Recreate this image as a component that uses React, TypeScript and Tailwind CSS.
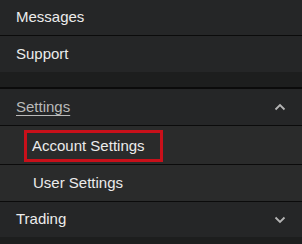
const Chevron = ({ up }: { up?: boolean }) => (
  <svg width="12" height="8" viewBox="0 0 12 8" className="text-[#b5b5b5]">
    <path
      d={up ? "M1.5 6.5 L6 2 L10.5 6.5" : "M1.5 1.5 L6 6 L10.5 1.5"}
      fill="none"
      stroke="currentColor"
      strokeWidth="1.8"
    />
  </svg>
);

export default function App() {
  return (
    <div
      className="w-[302px] h-[244px] overflow-hidden bg-[#252627] text-[15px] text-[#ececec]"
      style={{ fontFamily: '"Liberation Sans", Arial, sans-serif' }}
    >
      <div className="flex h-[36px] items-center border-b border-[#0b0b0b] pl-[16px]">Messages</div>
      <div className="flex h-[36px] items-center pl-[16px]">Support</div>
      <div className="h-[17px] border-b-2 border-[#0b0b0b] bg-[#1d1e1e]" />
      <div className="flex h-[37px] items-center justify-between border-b border-[#0b0b0b] pl-[16px] pr-[16px]">
        <span className="text-[#b9b9b9] underline underline-offset-[3px]">Settings</span>
        <Chevron up />
      </div>
      <div className="flex h-[39px] items-center border-b border-[#0b0b0b] bg-[#2a2b2b] pl-[24px] pt-[2px]">
        <span className="flex h-[32px] w-[139px] items-center border-[3px] border-[#c8101a] pl-[5px]">
          Account Settings
        </span>
      </div>
      <div className="flex h-[37px] items-center border-b border-[#0b0b0b] bg-[#2a2b2b] pl-[33px]">
        User Settings
      </div>
      <div className="flex h-[35px] items-center justify-between pl-[16px] pr-[16px]">
        <span>Trading</span>
        <Chevron />
      </div>
      <div className="h-[8px] bg-[#1d1e1e]" />
    </div>
  );
}
